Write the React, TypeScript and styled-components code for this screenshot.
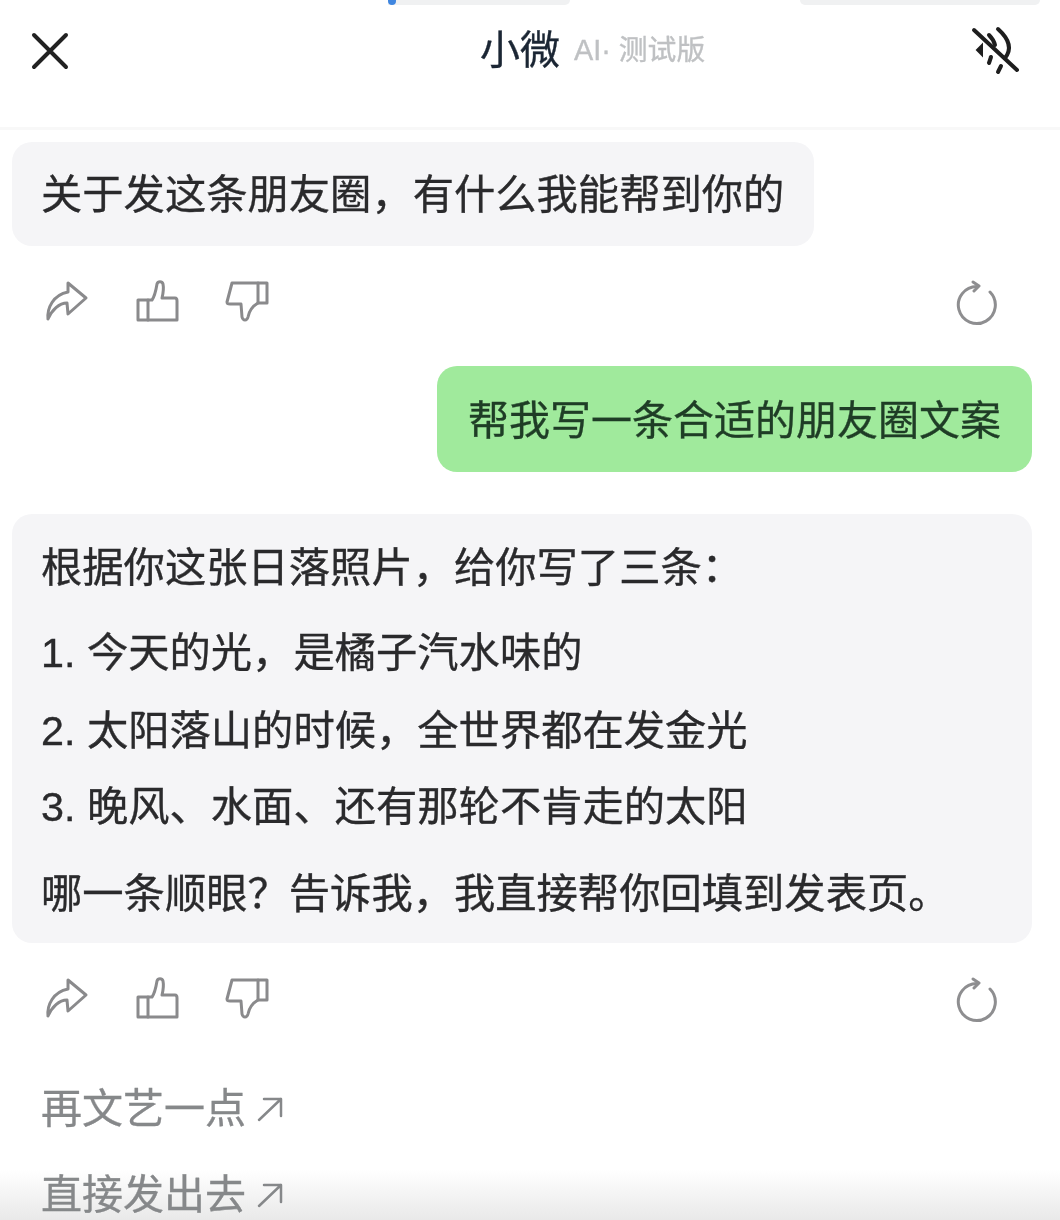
import styled, { createGlobalStyle } from "styled-components";

const GlobalStyle = createGlobalStyle`
  html, body {
    margin: 0;
    padding: 0;
    background: #fff;
  }
  body {
    font-family: "Liberation Sans", "Noto Sans CJK SC", sans-serif;
  }
`;

const Page = styled.div`
  position: relative;
  width: 1060px;
  height: 1220px;
  overflow: hidden;
  background: #fff;
  color: #2a2a2c;
  filter: blur(0.7px);
  -webkit-text-stroke: 0.35px currentColor;
`;

const TopStubs = styled.div`
  display: flex;
  height: 5px;
  padding-left: 350px;
  gap: 230px;
`;

const Stub = styled.div<{ $width: number; $capped?: boolean }>`
  display: flex;
  width: ${(props) => props.$width}px;
  height: 5px;
  padding-left: ${(props) => (props.$capped ? 38 : 0)}px;
  box-sizing: border-box;
  background: ${(props) =>
    props.$capped ? "linear-gradient(90deg, #fff 38px, #f0f1f2 38px)" : "#f0f1f2"};
  border-radius: 0 0 22px 22px;
`;

const StubDot = styled.span`
  width: 8px;
  height: 5px;
  background: #3f86e0;
  border-radius: 0 0 4px 4px;
`;

const Header = styled.header`
  display: grid;
  grid-template-columns: 452px auto 1fr;
  align-items: start;
  height: 122px;
  padding: 0 40px 0 28px;
  border-bottom: 3px solid #f8f8f8;
`;

const HeaderSlot = styled.div<{ $end?: boolean }>`
  display: flex;
  justify-content: ${(props) => (props.$end ? "flex-end" : "flex-start")};
  padding-top: ${(props) => (props.$end ? 21 : 24)}px;
`;

const Title = styled.div`
  display: flex;
  align-items: center;
  gap: 14px;
  padding-top: 20px;
`;

const TitleName = styled.span`
  font-size: 40px;
  line-height: 50px;
  color: #1b2634;
`;

const TitleTag = styled.span`
  font-size: 28.8px;
  line-height: 50px;
  color: #bfc1c3;
`;

const Thread = styled.main`
  position: relative;
  z-index: 1;
  display: flex;
  flex-direction: column;
  padding: 12px 28px 0 12px;
`;

const Bubble = styled.div`
  align-self: flex-start;
  padding: 30px 30px 28px 29px;
  font-size: 41.3px;
  line-height: 46px;
  white-space: nowrap;
  background: #f5f5f7;
  border-radius: 20px;
`;

const UserBubble = styled(Bubble)`
  align-self: flex-end;
  padding: 32px 31px 28px 31px;
  font-size: 41px;
  background: #a0ea9c;
  color: #1f3d26;
`;

const AnswerBubble = styled(Bubble)`
  align-self: stretch;
  margin-top: 42px;
  padding: 31px 29px 26px;
`;

const AnswerLine = styled.p<{ $gap?: number }>`
  margin: ${(props) => props.$gap ?? 0}px 0 0;
`;

const Actions = styled.div`
  display: flex;
  align-items: flex-start;
  justify-content: space-between;
  box-sizing: border-box;
  height: 120px;
  padding: 34px 33px 0;
`;

const ActionGroup = styled.div`
  display: flex;
  gap: 46px;
  color: #8a8a8c;
`;

const Refresh = styled.div`
  display: flex;
  color: #8e8e90;
`;

const Suggestions = styled.div`
  display: flex;
  flex-direction: column;
  gap: 40px;
  padding-left: 29px;
  margin-top: 23px;
`;

const Suggestion = styled.div`
  display: flex;
  align-items: center;
  gap: 11px;
  font-size: 41px;
  line-height: 46px;
  color: #86888a;
`;

const BottomFade = styled.div`
  position: absolute;
  left: 0;
  right: 0;
  bottom: 0;
  height: 50px;
  background: linear-gradient(rgba(225, 225, 225, 0), rgba(218, 218, 218, 0.6));
`;

const CloseIcon = () => (
  <svg width="44" height="44" viewBox="0 0 44 44" fill="none" stroke="#222" strokeWidth="4" strokeLinecap="round">
    <path d="M6 6 L38 38 M38 6 L6 38" />
  </svg>
);

const MuteIcon = () => (
  <svg width="50" height="50" viewBox="0 0 50 50" fill="none" stroke="#1e1e1e" strokeWidth="4" strokeLinecap="round">
    <path d="M4 4 L47 44" />
    <path d="M28 3 C38 12 43 22 35 32" />
    <path d="M19 9 C22 12 24 15 25 19" />
    <path d="M21 31 L19 37" />
    <path d="M31 40 L28 46" />
    <path d="M12 19 L7 24 L12 29 Z" fill="#1e1e1e" strokeWidth="2" />
  </svg>
);

const ShareIcon = () => (
  <svg width="44" height="42" viewBox="0 0 44 42" fill="none" stroke="currentColor" strokeWidth="3" strokeLinejoin="round" strokeLinecap="round">
    <path d="M3 39 C2 28 8 15 23 12 L23 3 L41 18 L23 34 L22 23 C14 23 7 30 3 39 Z" />
  </svg>
);

const ThumbUpIcon = () => (
  <svg width="44" height="42" viewBox="0 0 44 42" fill="none" stroke="currentColor" strokeWidth="3" strokeLinejoin="round" strokeLinecap="round">
    <path d="M3 20 H13 V40 H3 Z" />
    <path d="M13 20 H17 C20 16 21 10 22 4 C23 1 27 1 28 4 C29 9 28 14 27 18 H40 C42 18 42 20 42 21 V40 H13" />
  </svg>
);

const ThumbDownIcon = () => (
  <svg width="44" height="42" viewBox="0 0 44 42" fill="none" stroke="currentColor" strokeWidth="3" strokeLinejoin="round" strokeLinecap="round">
    <path d="M33 3 H42 V23 H33 Z" />
    <path d="M33 3 H7 L2 22 C2 24 3 24 5 24 H16 L17 37 C18 41 22 41 23 37 C24 32 26 27 33 23" />
  </svg>
);

const RefreshIcon = () => (
  <svg width="44" height="50" viewBox="0 0 44 50" fill="none" stroke="currentColor" strokeWidth="3" strokeLinecap="round" strokeLinejoin="round">
    <path d="M35 12 A18.500 18.500 0 1 1 22 6.500" />
    <path d="M18 2 L24 6 L19 11" />
  </svg>
);

const ArrowIcon = () => (
  <svg width="26" height="26" viewBox="0 0 26 26" fill="none" stroke="#86888a" strokeWidth="2.500" strokeLinecap="round" strokeLinejoin="round">
    <path d="M2 24 L24 3 M7 3 H24 V20" />
  </svg>
);

const MessageActions = () => (
  <Actions>
    <ActionGroup>
      <ShareIcon />
      <ThumbUpIcon />
      <ThumbDownIcon />
    </ActionGroup>
    <Refresh>
      <RefreshIcon />
    </Refresh>
  </Actions>
);

export default function App() {
  return (
    <Page>
      <GlobalStyle />
      <TopStubs>
        <Stub $width={220} $capped>
          <StubDot />
        </Stub>
        <Stub $width={240} />
      </TopStubs>
      <Header>
        <HeaderSlot>
          <CloseIcon />
        </HeaderSlot>
        <Title>
          <TitleName>小微</TitleName>
          <TitleTag>AI· 测试版</TitleTag>
        </Title>
        <HeaderSlot $end>
          <MuteIcon />
        </HeaderSlot>
      </Header>
      <Thread>
        <Bubble>关于发这条朋友圈，有什么我能帮到你的</Bubble>
        <MessageActions />
        <UserBubble>帮我写一条合适的朋友圈文案</UserBubble>
        <AnswerBubble>
          <AnswerLine>根据你这张日落照片，给你写了三条：</AnswerLine>
          <AnswerLine $gap={39}>1. 今天的光，是橘子汽水味的</AnswerLine>
          <AnswerLine $gap={32}>2. 太阳落山的时候，全世界都在发金光</AnswerLine>
          <AnswerLine $gap={30}>3. 晚风、水面、还有那轮不肯走的太阳</AnswerLine>
          <AnswerLine $gap={41}>哪一条顺眼？告诉我，我直接帮你回填到发表页。</AnswerLine>
        </AnswerBubble>
        <MessageActions />
        <Suggestions>
          <Suggestion>
            再文艺一点
            <ArrowIcon />
          </Suggestion>
          <Suggestion>
            直接发出去
            <ArrowIcon />
          </Suggestion>
        </Suggestions>
      </Thread>
      <BottomFade />
    </Page>
  );
}
